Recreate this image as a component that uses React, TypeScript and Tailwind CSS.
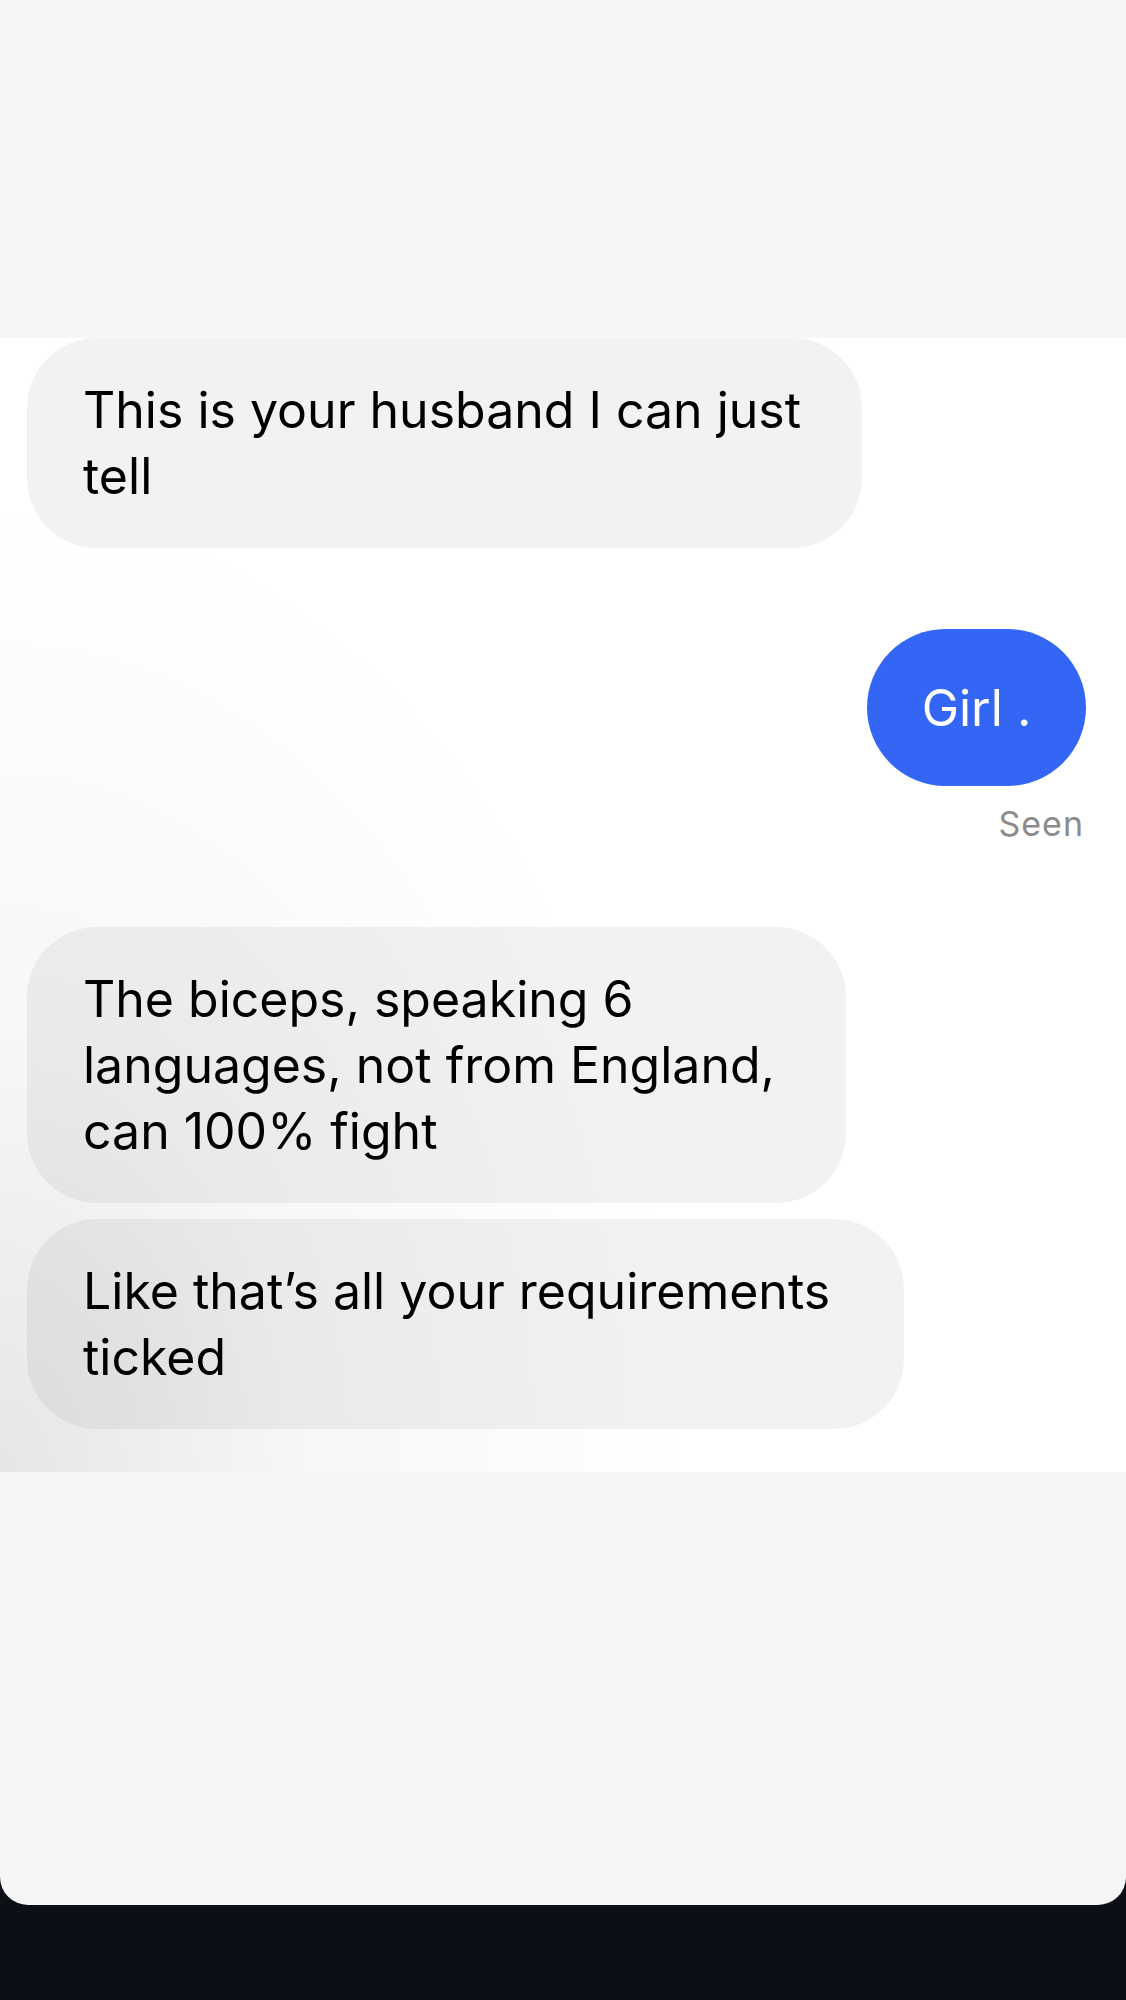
import React from "react";

type Bubble = { lines: string[]; width: string };

const firstMsg: Bubble = {
  lines: ["This is your husband I can just", "tell"],
  width: "w-[835px]",
};

const lastMsgs: Bubble[] = [
  {
    lines: ["The biceps, speaking 6", "languages, not from England,", "can 100% fight"],
    width: "w-[819px]",
  },
  {
    lines: ["Like that\u2019s all your requirements", "ticked"],
    width: "w-[877px]",
  },
];

function Incoming({ lines, width }: Bubble) {
  return (
    <div
      className={`${width} rounded-[70px] bg-black/[0.05] px-[56px] py-[39px] text-[50px] leading-[66px] text-black whitespace-nowrap`}
    >
      {lines.map((line) => (
        <div key={line}>{line}</div>
      ))}
    </div>
  );
}

export default function App() {
  return (
    <main className="min-h-[2000px] bg-[#0c1016] font-['Inter',sans-serif] antialiased">
      <div className="bg-[#f6f6f6] rounded-b-[28px] overflow-hidden">
        <div className="h-[338px]" />

        <section className="h-[1134px] bg-white bg-[radial-gradient(60%_85%_at_0%_100%,#e6e6e6,#f7f7f7_45%,#ffffff)] flex flex-col pl-[27px] pr-[40px]">
          <Incoming {...firstMsg} />

          <div className="mt-[81px] flex flex-col items-end">
            <div className="w-[219px] h-[157px] rounded-full bg-[#3366f4] flex items-center justify-center text-white text-[50px] leading-none">
              Girl .
            </div>
            <p className="mt-[18px] mr-[2px] text-[34px] leading-[40px] text-[#8b8b8b] tracking-[1px]">
              Seen
            </p>
          </div>

          <div className="mt-[83px] flex flex-col gap-[16px]">
            {lastMsgs.map((m) => (
              <Incoming key={m.lines[0]} {...m} />
            ))}
          </div>
        </section>

        <div className="h-[433px]" />
      </div>
    </main>
  );
}
